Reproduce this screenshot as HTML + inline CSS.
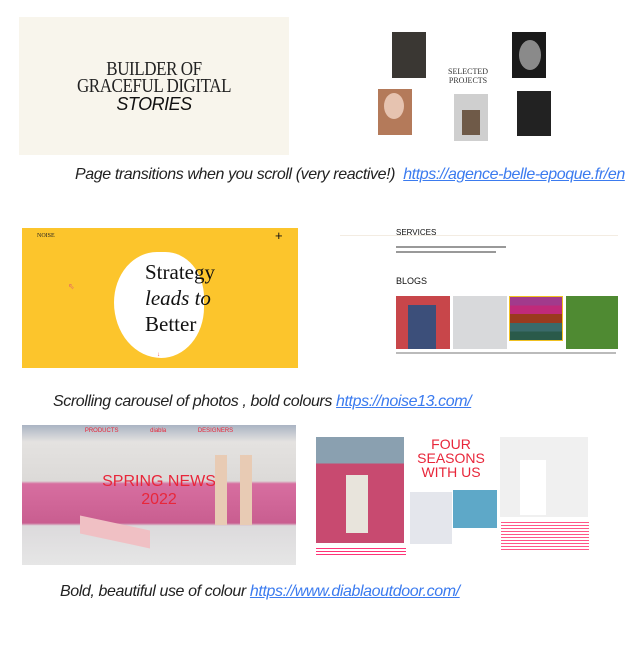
<!DOCTYPE html>
<html><head><meta charset="utf-8"><style>
*{margin:0;padding:0;box-sizing:border-box}
body{width:640px;height:657px;background:#fff;position:relative;overflow:hidden;font-family:"Liberation Sans",sans-serif}
.a{position:absolute}
.cap{position:absolute;font-family:"Liberation Sans",sans-serif;font-style:italic;font-size:16px;color:#222;white-space:nowrap;letter-spacing:-0.4px}
.cap a{color:#3b7bef;text-decoration:underline}
.serif{font-family:"Liberation Serif",serif}
</style></head><body>

<!-- Panel 1 -->
<div class="a" style="left:19px;top:17px;width:270px;height:138px;background:#f8f5ec"></div>
<div class="a serif" style="left:19px;top:61px;width:270px;text-align:center;font-size:20px;line-height:17px;color:#222;letter-spacing:-0.5px;transform:scaleX(0.85)">BUILDER OF<br>GRACEFUL DIGITAL</div>
<div class="a" style="left:19px;top:94px;width:270px;text-align:center;font-size:18px;font-style:italic;color:#111;letter-spacing:-0.5px">STORIES</div>

<!-- Panel 2 -->
<div class="a" style="left:392px;top:32px;width:34px;height:46px;background:#3a3733"></div>
<div class="a" style="left:512px;top:32px;width:34px;height:46px;background:#1a1a1a"></div>
<div class="a" style="left:519px;top:40px;width:22px;height:30px;border-radius:50%;background:#8a8a8a"></div>
<div class="a serif" style="left:446px;top:67px;width:44px;text-align:center;font-size:8px;line-height:9px;color:#333">SELECTED<br>PROJECTS</div>
<div class="a" style="left:378px;top:89px;width:34px;height:46px;background:#b47a5a"></div>
<div class="a" style="left:384px;top:93px;width:20px;height:26px;border-radius:50%;background:#e6c3b0"></div>
<div class="a" style="left:454px;top:94px;width:34px;height:47px;background:#cfcfcf"></div>
<div class="a" style="left:462px;top:110px;width:18px;height:25px;background:#6f5a48"></div>
<div class="a" style="left:517px;top:91px;width:34px;height:45px;background:#222"></div>

<div class="cap" style="left:75px;top:166px">Page transitions when you scroll (very reactive!)&nbsp; <a>https://agence-belle-epoque.fr/en</a></div>

<!-- Noise panel -->
<div class="a" style="left:22px;top:228px;width:276px;height:140px;background:#fcc52c"></div>
<div class="a" style="left:114px;top:252px;width:90px;height:106px;border-radius:50% 45% 50% 55%;background:#fff"></div>
<div class="a serif" style="left:37px;top:233px;font-size:6px;color:#222">NOISE</div>
<div class="a" style="left:275px;top:228px;font-size:13px;color:#111">+</div>
<div class="a" style="left:68px;top:282px;font-size:8px;color:#e57060">⇖</div>
<div class="a serif" style="left:145px;top:259px;font-size:21px;line-height:26px;color:#111">Strategy<br><i>leads to</i><br>Better</div>
<div class="a" style="left:157px;top:352px;font-size:6px;color:#e44">↓</div>

<!-- Blog panel -->
<div class="a" style="left:340px;top:235px;width:278px;height:1px;background:#f3ece2"></div>
<div class="a" style="left:396px;top:228px;font-size:8px;color:#111">SERVICES</div>
<div class="a" style="left:396px;top:246px;width:110px;height:2px;background:#999"></div>
<div class="a" style="left:396px;top:251px;width:100px;height:2px;background:#999"></div>
<div class="a" style="left:396px;top:276px;font-size:9px;color:#111">BLOGS</div>
<div class="a" style="left:396px;top:296px;width:54px;height:53px;background:#c8464a"></div>
<div class="a" style="left:408px;top:305px;width:28px;height:44px;background:#3c4f7a"></div>
<div class="a" style="left:453px;top:296px;width:54px;height:53px;background:#d8d9db"></div>
<div class="a" style="left:509px;top:296px;width:54px;height:45px;background:linear-gradient(#a23a8c 0 20%,#c02a7a 20% 40%,#9a3a1e 40% 60%,#3a6a6a 60% 80%,#2a5a4a 80%);border:1px solid #f0c020"></div>
<div class="a" style="left:566px;top:296px;width:52px;height:53px;background:#4f8a32"></div>
<div class="a" style="left:396px;top:352px;width:220px;height:2px;background:#bbb"></div>

<div class="cap" style="left:53px;top:393px">Scrolling carousel of photos , bold colours <a>https://noise13.com/</a></div>

<!-- Diabla panel -->
<div class="a" style="left:22px;top:425px;width:274px;height:140px;background:linear-gradient(#aab4c3 0,#e4e2e0 12%,#dcdad8 40%,#d76ea0 42%,#c95e90 70%,#dcdadc 72%,#e6e6e6 100%)"></div>
<div class="a" style="left:22px;top:428px;width:274px;font-size:6px;color:#e8263a;text-align:center;word-spacing:30px">PRODUCTS diabla DESIGNERS</div>
<div class="a" style="left:22px;top:473px;width:274px;text-align:center;font-size:16px;line-height:18px;color:#e8263a">SPRING NEWS<br>2022</div>
<div class="a" style="left:80px;top:523px;width:70px;height:18px;background:#f0c0c4;transform:skewY(12deg)"></div>
<div class="a" style="left:215px;top:455px;width:12px;height:70px;background:#e8cbb4"></div>
<div class="a" style="left:240px;top:455px;width:12px;height:70px;background:#e8cbb4"></div>

<!-- Right diabla -->
<div class="a" style="left:316px;top:437px;width:88px;height:106px;background:linear-gradient(#8aa0b0 0 25%,#c84a70 25%)"></div>
<div class="a" style="left:346px;top:475px;width:22px;height:58px;background:#e8e4dc"></div>
<div class="a" style="left:406px;top:437px;width:90px;text-align:center;font-size:14px;line-height:14px;color:#e8263a">FOUR<br>SEASONS<br>WITH US</div>
<div class="a" style="left:410px;top:492px;width:42px;height:52px;background:#e4e6ec"></div>
<div class="a" style="left:453px;top:490px;width:44px;height:38px;background:#5ea8c8"></div>
<div class="a" style="left:500px;top:437px;width:88px;height:80px;background:#f0f0f0"></div>
<div class="a" style="left:520px;top:460px;width:26px;height:55px;background:#fff"></div>
<div class="a" style="left:316px;top:548px;width:90px;height:8px;background:repeating-linear-gradient(#f37 0 1px,#fff 1px 3px)"></div>
<div class="a" style="left:501px;top:522px;width:88px;height:28px;background:repeating-linear-gradient(#f58 0 1px,#fff 1px 3px)"></div>

<div class="cap" style="left:60px;top:583px">Bold, beautiful use of colour <a>https://www.diablaoutdoor.com/</a></div>

</body></html>
